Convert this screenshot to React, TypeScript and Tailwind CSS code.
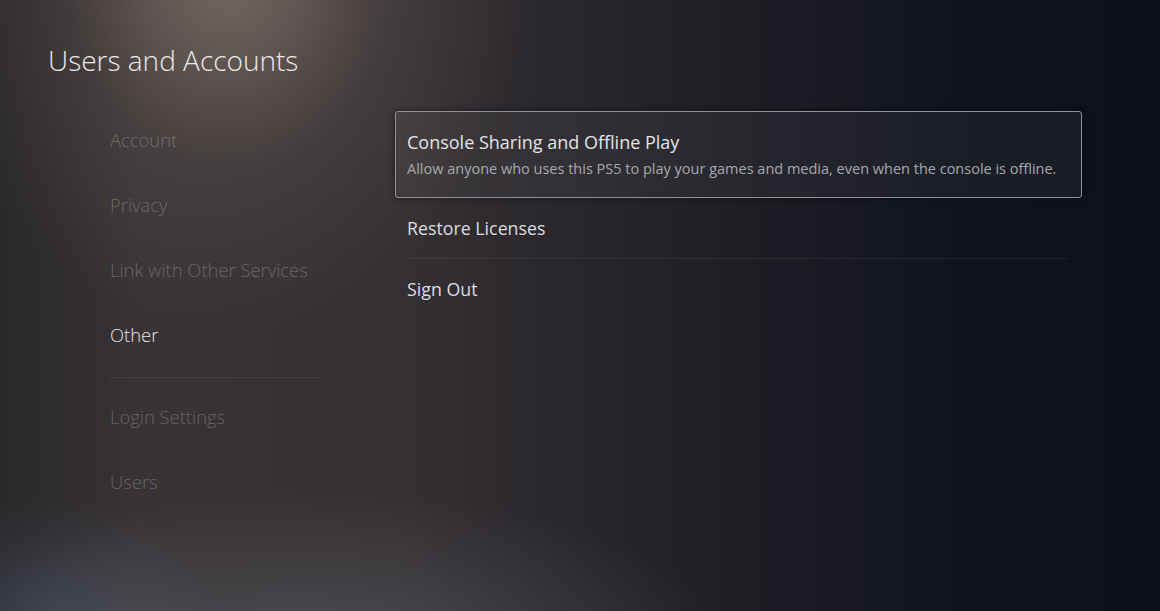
import React from 'react';

interface MenuItem {
  label: string;
  active?: boolean;
}

const leftTop: MenuItem[] = [
  { label: 'Account' },
  { label: 'Privacy' },
  { label: 'Link with Other Services' },
  { label: 'Other', active: true },
];

const leftBottom: MenuItem[] = [{ label: 'Login Settings' }, { label: 'Users' }];

const SideItem = ({ label, active }: MenuItem) => (
  <div className="h-[65px] flex items-center">
    <p className={active ? 'text-[18.4px] text-[#e8e6e6]' : 'text-[18.4px] text-white/25'}>{label}</p>
  </div>
);

const App = () => {
  return (
    <div
      className="w-[1160px] h-[611px] overflow-hidden text-white bg-[radial-gradient(ellipse_300px_360px_at_230px_-30px,rgba(170,150,135,0.55),rgba(120,105,98,0.22)_55%,transparent_100%),radial-gradient(ellipse_420px_170px_at_320px_660px,rgba(120,126,136,0.38),transparent),radial-gradient(ellipse_170px_120px_at_50px_620px,rgba(80,95,125,0.35),transparent),linear-gradient(90deg,#2a282a_0%,#383335_12%,#342f32_35%,#1f1f26_62%,#12141d_82%,#0e101a_100%)]"
      style={{ fontFamily: '"Open Sans", "Noto Sans", sans-serif' }}
    >
      <div className="pl-[48px] pt-[40px] h-[81px]">
        <h1 className="text-[28px] leading-[40px] font-light text-[#ece9e7]">Users and Accounts</h1>
      </div>

      <div className="flex">
        {/* section list */}
        <div className="w-[395px] pl-[110px] pt-[26px] font-light">
          {leftTop.map((item) => (
            <SideItem key={item.label} {...item} />
          ))}
          <div className="mt-[10px] mb-[6px] h-px w-[212px] bg-white/[0.07]" />
          {leftBottom.map((item) => (
            <SideItem key={item.label} {...item} />
          ))}
        </div>

        {/* options for the selected section */}
        <div className="pt-[30px] w-[687px]">
          <div className="h-[87px] rounded-[3px] border-[1.5px] border-[#8f929b] bg-white/[0.045] shadow-[0_0_6px_rgba(0,0,0,0.5)] pl-[11px] flex flex-col justify-center">
            <p className="text-[18px] leading-[24px] text-[#e4e4e6]">Console Sharing and Offline Play</p>
            <p className="text-[14.5px] leading-[20px] mt-[5px] text-[#a7a9af]">
              Allow anyone who uses this PS5 to play your games and media, even when the console is offline.
            </p>
          </div>
          <div className="pl-[12px] pr-[14px]">
            <div className="h-[61px] flex items-center border-b border-white/[0.07]">
              <p className="text-[17.8px] text-[#dcdde0]">Restore Licenses</p>
            </div>
            <div className="h-[61px] flex items-center">
              <p className="text-[17.8px] text-[#dcdde0]">Sign Out</p>
            </div>
          </div>
        </div>
      </div>
    </div>
  );
};

export default App;
